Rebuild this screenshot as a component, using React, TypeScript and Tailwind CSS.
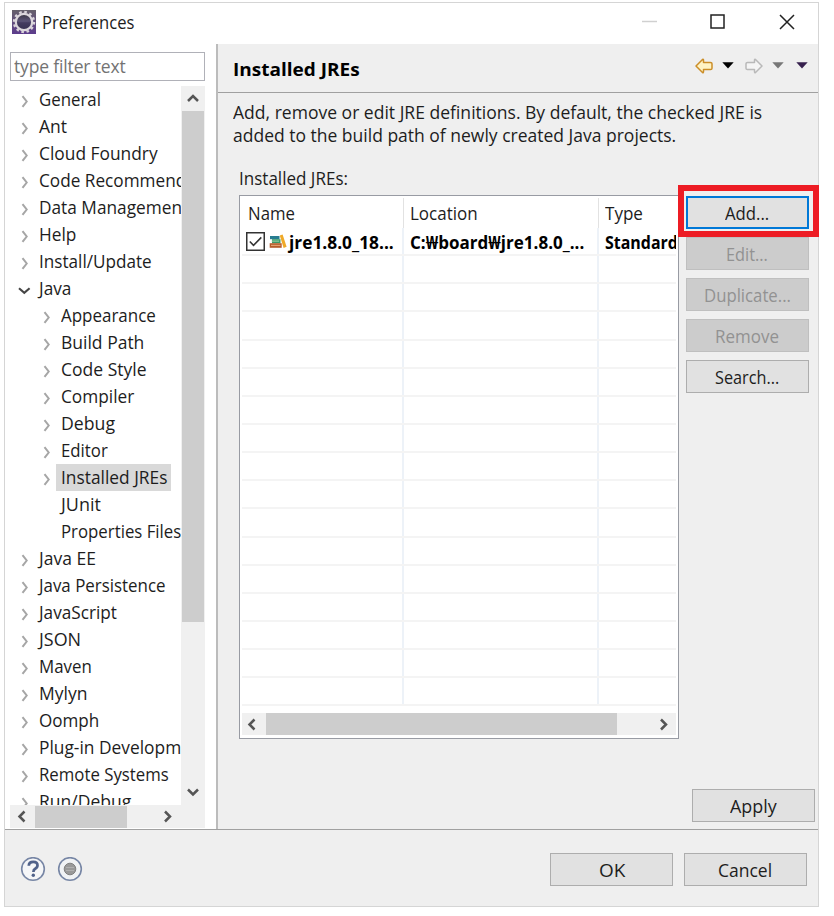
import { useLayoutEffect, useRef, useState } from "react";

/** Condenses a label horizontally so that it occupies the given width. */
function Fit({ w, children, className = "" }: { w: number; children: string; className?: string }) {
  const ref = useRef<HTMLSpanElement>(null);
  const [scale, setScale] = useState(0.93);
  useLayoutEffect(() => {
    if (ref.current) setScale(w / ref.current.offsetWidth);
  }, [w]);
  return (
    <span className={`block shrink-0 ${className}`} style={{ width: w }}>
      <span
        ref={ref}
        className="inline-block origin-left whitespace-pre"
        style={{ transform: `scaleX(${scale})` }}
      >
        {children}
      </span>
    </span>
  );
}

type Dir = "left" | "right" | "up" | "down";
const arrows: Record<Dir, string> = {
  left: "M9.5 2.5 4.5 7.5l5 5",
  right: "M5 2.5l5 5-5 5",
  up: "M2 10l5-5 5 5",
  down: "M2 4.5l5 5 5-5",
};

function Arrow({ dir }: { dir: Dir }) {
  return (
    <svg className="size-[15px] shrink-0" viewBox="0 0 15 15" fill="none" stroke="#555" strokeWidth="2.5">
      <path d={arrows[dir]} />
    </svg>
  );
}

type Item = { t: string; w: number; level?: number; open?: boolean; leaf?: boolean; sel?: boolean };
const items: Item[] = [
  { t: "General", w: 61.5 },
  { t: "Ant", w: 28 },
  { t: "Cloud Foundry", w: 119 },
  { t: "Code Recommenders", w: 172 },
  { t: "Data Management", w: 149 },
  { t: "Help", w: 37.5 },
  { t: "Install/Update", w: 112.5 },
  { t: "Java", w: 32.5, open: true },
  { t: "Appearance", w: 95, level: 1 },
  { t: "Build Path", w: 83, level: 1 },
  { t: "Code Style", w: 85, level: 1 },
  { t: "Compiler", w: 73, level: 1 },
  { t: "Debug", w: 53.5, level: 1 },
  { t: "Editor", w: 47, level: 1 },
  { t: "Installed JREs", w: 106, level: 1, sel: true },
  { t: "JUnit", w: 40, level: 1, leaf: true },
  { t: "Properties Files", w: 120, level: 1, leaf: true },
  { t: "Java EE", w: 57 },
  { t: "Java Persistence", w: 126.5 },
  { t: "JavaScript", w: 77.5 },
  { t: "JSON", w: 42 },
  { t: "Maven", w: 53 },
  { t: "Mylyn", w: 48 },
  { t: "Oomph", w: 60.5 },
  { t: "Plug-in Development", w: 168.5 },
  { t: "Remote Systems", w: 129.5 },
  { t: "Run/Debug", w: 92 },
];

function TreeRow({ t, w, level, open, leaf, sel }: Item) {
  return (
    <div className={`flex h-[27px] shrink-0 items-center ${level ? "pl-[30px]" : "pl-2"}`}>
      <svg className="mt-[3px] h-[15px] w-[14px] shrink-0" viewBox="0 0 14 15" fill="none">
        {!leaf && (
          <path
            d={open ? "M1 5.2l5.3 4.6 5.3-4.6" : "M4.5 2.2l4.2 5.3-4.2 5.3"}
            stroke={open ? "#454545" : "#a6a6a6"}
            strokeWidth={open ? 2.1 : 2}
          />
        )}
      </svg>
      <div className={`ml-0.5 flex h-[27px] items-center pr-1 pb-px pl-[5px] ${sel ? "bg-[#d9d9d9]" : ""}`}>
        <Fit w={w}>{t}</Fit>
      </div>
    </div>
  );
}

function Button({ t, w, disabled, focus }: { t: string; w: number; disabled?: boolean; focus?: boolean }) {
  const look = disabled
    ? "border border-[#bfbfbf] bg-[#cccccc] text-[#929292]"
    : focus
      ? "border-2 border-[#0078d7] bg-[#e1e1e1]"
      : "border border-[#adadad] bg-[#e1e1e1]";
  return (
    <button className={`flex h-[33px] w-[123px] shrink-0 items-center justify-center pr-px ${look}`}>
      <Fit w={w}>{t}</Fit>
    </button>
  );
}

function EclipseIcon() {
  return (
    <svg className="size-6 shrink-0" viewBox="0 0 24 24">
      <defs>
        <linearGradient id="frame" x1="0" y1="0" x2="0" y2="1">
          <stop offset="0" stopColor="#66606b" />
          <stop offset="1" stopColor="#5d3c8d" />
        </linearGradient>
        <linearGradient id="orb" x1="0" y1="0" x2="0" y2="1">
          <stop offset="0" stopColor="#38343f" />
          <stop offset=".45" stopColor="#5c5478" />
          <stop offset=".55" stopColor="#443b60" />
          <stop offset="1" stopColor="#373051" />
        </linearGradient>
      </defs>
      <rect width="24" height="24" fill="url(#frame)" />
      <circle cx="12" cy="12" r="10" fill="none" stroke="#d9d4da" strokeWidth="2.4" strokeDasharray="2.6 2.636" />
      <circle cx="12" cy="12" r="8.2" fill="url(#orb)" stroke="#dcd7dc" strokeWidth="2.2" />
    </svg>
  );
}

function Caret({ color }: { color: string }) {
  return (
    <svg className="h-[7px] w-3 shrink-0" viewBox="0 0 12 7" fill={color}>
      <path d="M.3.3h11.4L6 6.5z" />
    </svg>
  );
}

function NavArrow({ forward }: { forward?: boolean }) {
  return (
    <svg
      className={`h-4 w-[18px] shrink-0 ${forward ? "-scale-x-100" : ""}`}
      viewBox="0 0 18 16"
      fill={forward ? "#f5f5f5" : "#fff3c4"}
      stroke={forward ? "#b9b9b9" : "#cb8e29"}
      strokeWidth="1.5"
      strokeLinejoin="round"
    >
      <path d="M1 8l6.5-6.5q1-.5 1 .7v2.2h7q1.5 0 1.5 1.4v4.4q0 1.4-1.5 1.4h-7v2.2q0 1.2-1 .7z" />
    </svg>
  );
}

function Books() {
  return (
    <svg className="h-[15px] w-[18px] shrink-0" viewBox="0 0 18 15">
      <path d="M1 2h9.5v3.2H1z" fill="#277d91" />
      <path d="M3 5.2h8.5v4H3z" fill="#3b9a68" />
      <path d="M2.6 6.6h7.5v1H2.6z" fill="#a8d8b1" />
      <path d="M.7 9.2h12v4.6H.7z" fill="#b65c2b" />
      <path d="M2 10.8h9.5v1.2H2z" fill="#e3a171" />
      <path d="M10.8 1.5L13.6.4l4 12.4-3 1.3z" fill="#efa928" />
    </svg>
  );
}

const lines = Array.from({ length: 17 }, (_, i) => i);

function JreTable() {
  return (
    <div className="flex h-[544px] w-[440px] flex-col border border-[#989ba3] bg-white p-[2px]">
      <div className="relative h-[514px] overflow-hidden">
        <div className="grid h-[30px] grid-cols-[162px_195px_77px]">
          <div className="border-r border-[#e2e2e2] pt-[3px] pl-1.5"><Fit w={47}>Name</Fit></div>
          <div className="border-r border-[#e2e2e2] pt-[3px] pl-1.5"><Fit w={68}>Location</Fit></div>
          <div className="pt-[3px] pl-1.5"><Fit w={38}>Type</Fit></div>
        </div>
        {lines.map((i) => (
          <div
            key={i}
            className="grid h-[28.15px] grid-cols-[162px_195px_77px] border-b-2 border-[#f4f4f4] font-bold text-black"
          >
            <div className="flex items-center overflow-hidden border-r-2 border-[#edf2f8] pl-1">
              {i === 0 && (
                <>
                  <svg className="size-[19px] shrink-0" viewBox="0 0 19 19" fill="none" stroke="#333">
                    <rect x=".75" y=".75" width="17.5" height="17.5" strokeWidth="1.5" fill="#fff" />
                    <path d="M3.8 9.5l3.7 3.8 7.8-7.9" strokeWidth="1.6" />
                  </svg>
                  <span className="ml-1"><Books /></span>
                  <Fit w={105} className="mt-px ml-[2px]">jre1.8.0_18...</Fit>
                </>
              )}
            </div>
            <div className="flex items-center overflow-hidden border-r-2 border-[#edf2f8] pl-1.5">
              {i === 0 && <Fit w={174} className="mt-px">C:₩board₩jre1.8.0_...</Fit>}
            </div>
            <div className="flex items-center overflow-hidden pl-1.5">
              {i === 0 && <Fit w={73} className="mt-px">Standard</Fit>}
            </div>
          </div>
        ))}
      </div>
      <div className="mt-px flex h-[22px] shrink-0 items-center bg-[#f0f0f0]">
        <div className="flex w-6 justify-center pr-1"><Arrow dir="left" /></div>
        <div className="h-full w-[351px] bg-[#cdcdcd]" />
        <div className="ml-auto mr-[5px]"><Arrow dir="right" /></div>
      </div>
    </div>
  );
}

export default function App() {
  return (
    <div className="h-[916px] w-[834px] overflow-hidden bg-white pt-0.5 pl-1 font-['Open_Sans','Noto_Sans','Noto_Sans_CJK_KR',sans-serif] text-[17.5px] leading-6 text-[#1d1d1d]">
      <div className="flex h-[905px] w-[815px] flex-col border border-[#d5d5d5]">
        <header className="flex h-[41px] shrink-0 items-center pb-1 pl-[7px]">
          <EclipseIcon />
          <Fit w={92} className="ml-[6px]">Preferences</Fit>
          <svg className="ml-auto mr-[23px] h-5 w-[160px]" viewBox="0 0 160 20" fill="none" stroke="#222" strokeWidth="1.5">
            <path d="M7 9.5h15" stroke="#d0d0d0" />
            <rect x="76" y="3" width="13" height="13" />
            <path d="M145 3l14 14M159 3l-14 14" />
          </svg>
        </header>

        <div className="flex h-[785px] shrink-0">
          <aside className="flex w-[213px] shrink-0 flex-col border-r-2 border-[#bcbcbc] pt-2 pl-[5px]">
            <input
              className="h-[29px] w-[195px] shrink-0 border-[1.5px] border-[#b0b1b8] bg-white pb-px pl-[3px] tracking-[-0.15px] outline-none placeholder:text-[#737373]"
              placeholder="type filter text"
            />
            <div className="mt-[5px] flex h-[719px] w-[195px] shrink-0">
              <nav className="flex w-[171px] shrink-0 flex-col overflow-hidden">
                {items.map((it) => <TreeRow key={it.t} {...it} />)}
              </nav>
              <div className="flex w-6 flex-col items-center bg-[#f0f0f0]">
                <div className="flex h-[25px] items-center"><Arrow dir="up" /></div>
                <div className="h-[511px] w-[22px] bg-[#cdcdcd]" />
                <div className="mt-auto mb-[5px]"><Arrow dir="down" /></div>
              </div>
            </div>
            <div className="flex h-[23px] w-[195px] shrink-0 items-center bg-[#f0f0f0]">
              <div className="flex w-[25px] justify-center"><Arrow dir="left" /></div>
              <div className="h-[22px] w-[92px] bg-[#cdcdcd]" />
              <div className="ml-auto mr-[30px]"><Arrow dir="right" /></div>
            </div>
          </aside>

          <main className="flex min-w-0 flex-1 flex-col bg-[#efefef]">
            <div className="flex h-[49px] shrink-0 items-center border-b border-[#a0a0a0] pl-[15px]">
              <Fit w={127} className="mt-px font-bold text-black">Installed JREs</Fit>
              <div className="mr-[10px] mb-[5px] ml-auto flex items-center">
                <NavArrow />
                <span className="ml-[9px]"><Caret color="#000" /></span>
                <span className="ml-[11px]"><NavArrow forward /></span>
                <span className="ml-[9px]"><Caret color="#777" /></span>
                <span className="ml-3"><Caret color="#36204d" /></span>
              </div>
            </div>
            <div className="mt-[7px] pl-[15px] leading-6">
              <Fit w={529}>Add, remove or edit JRE definitions. By default, the checked JRE is</Fit>
              <Fit w={443} className="-mt-px">added to the build path of newly created Java projects.</Fit>
            </div>
            <div className="mt-[19px] pl-[21px]"><Fit w={109}>Installed JREs:</Fit></div>
            <div className="mt-[5px] flex pl-[21px]">
              <JreTable />
              <div className="relative mt-px ml-[7px] flex flex-col gap-2">
                <Button t="Add..." w={44} focus />
                <Button t="Edit..." w={42} disabled />
                <Button t="Duplicate..." w={87} disabled />
                <Button t="Remove" w={64} disabled />
                <Button t="Search..." w={64} />
                <div className="absolute -top-[11px] -left-[8px] h-[52px] w-[141px] border-[6px] border-[#ed1c24]" />
              </div>
            </div>
            <div className="mt-auto mr-[3px] mb-[7px] flex justify-end"><Button t="Apply" w={47} /></div>
          </main>
        </div>

        <footer className="flex flex-1 items-center border-t border-[#a0a0a0] bg-[#efefef] pt-[3px] pr-[11px] pl-[15px]">
          <svg className="size-[26px]" viewBox="0 0 26 26">
            <circle cx="13" cy="12" r="11.3" fill="#f5f6f8" stroke="#7786a5" strokeWidth="1.6" />
            <path d="M8.8 8.8q0-4 4.5-4 4.2 0 4.2 3.5 0 2.3-2.3 3.5-1.8 1-1.8 3.2" fill="none" stroke="#50628a" strokeWidth="2.7" />
            <circle cx="13.3" cy="18.3" r="1.7" fill="#50628a" />
          </svg>
          <svg className="ml-[11px] size-[26px]" viewBox="0 0 26 26">
            <circle cx="13" cy="12" r="11.3" fill="#f1f3f5" stroke="#7786a5" strokeWidth="1.6" />
            <circle cx="13" cy="12" r="5.8" fill="#999" stroke="#818181" />
            <path d="M9 10.5h8M9 13.5h8" stroke="#b0b0b0" />
          </svg>
          <div className="ml-auto flex gap-[11px]">
            <Button t="OK" w={26} />
            <Button t="Cancel" w={54} />
          </div>
        </footer>
      </div>
    </div>
  );
}
